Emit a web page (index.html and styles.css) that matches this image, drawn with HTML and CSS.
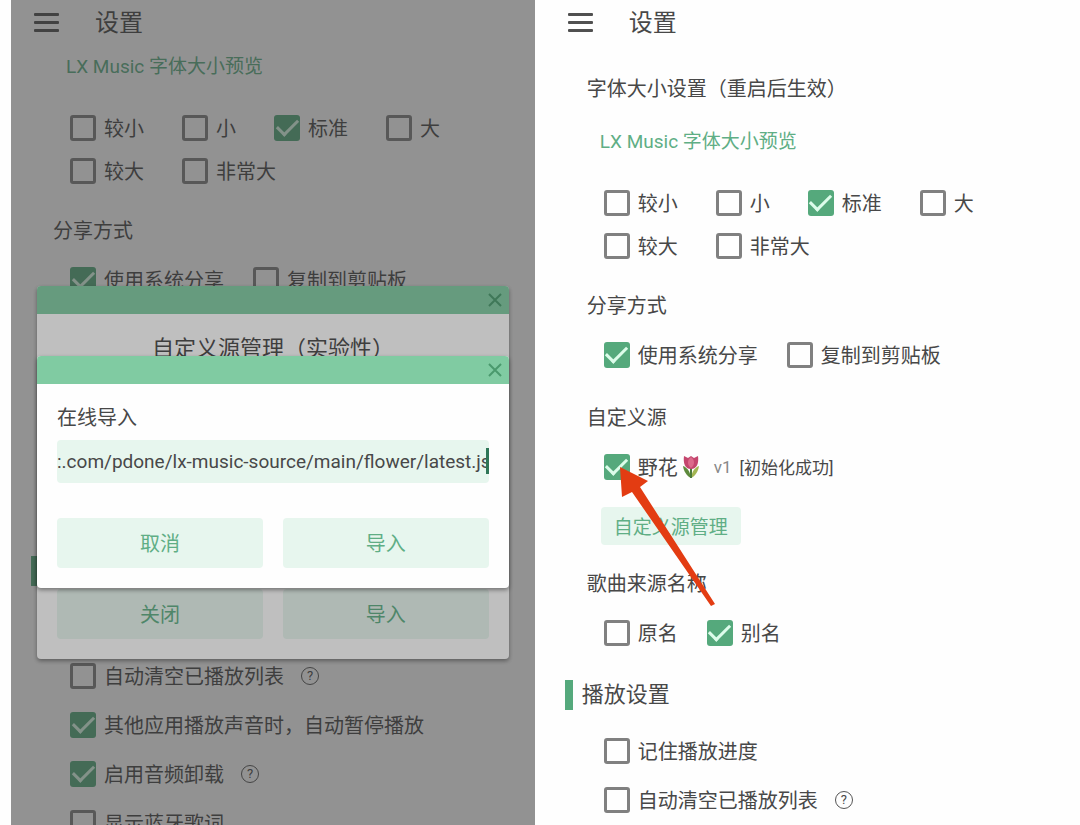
FILE: index.html
```html
<!DOCTYPE html>
<html lang="zh-CN">
<head>
  <meta charset="UTF-8" />
  <title>设置</title>
  <meta name="viewport" content="width=device-width, initial-scale=1.0" />
  <link rel="stylesheet" href="styles.css">
</head>
<body>

  <div class="phone phone-left">
    <header class="topbar">
      <button class="menu" aria-label="菜单"><span></span><span></span><span></span></button>
      <h1>设置</h1>
    </header>

    <main class="settings">
      <p class="preview">LX Music 字体大小预览</p>
      <div class="sizes">
        <label class="option"><input type="checkbox">较小</label>
        <label class="option"><input type="checkbox">小</label>
        <label class="option"><input type="checkbox" checked>标准</label>
        <label class="option"><input type="checkbox">大</label>
        <label class="option"><input type="checkbox">较大</label>
        <label class="option"><input type="checkbox">非常大</label>
      </div>

      <h3>分享方式</h3>
      <div class="row">
        <label class="option"><input type="checkbox" checked>使用系统分享</label>
        <label class="option"><input type="checkbox">复制到剪贴板</label>
      </div>

      <!-- hidden behind the dialogs, only the section bar sticks out -->
      <div class="covered"></div>

      <h2>播放设置</h2>
      <div class="row">
        <label class="option"><input type="checkbox" aria-label="记住播放进度"></label>
      </div>
      <div class="row">
        <label class="option"><input type="checkbox">自动清空已播放列表</label>
        <button class="help" aria-label="帮助">?</button>
      </div>
      <div class="row">
        <label class="option"><input type="checkbox" checked>其他应用播放声音时，自动暂停播放</label>
      </div>
      <div class="row">
        <label class="option"><input type="checkbox" checked>启用音频卸载</label>
        <button class="help" aria-label="帮助">?</button>
      </div>
      <div class="row">
        <label class="option"><input type="checkbox">显示蓝牙歌词</label>
      </div>
    </main>

    <!-- source manager -->
    <div class="overlay overlay-manager">
      <div class="modal modal-manager">
        <div class="modal-head">
          <button class="close" aria-label="关闭">
            <svg viewBox="0 0 14 14"><path d="M1 1L13 13M13 1L1 13"/></svg>
          </button>
        </div>
        <div class="modal-body">
          <h4 class="modal-title">自定义源管理（实验性）</h4>
          <div class="actions">
            <button>关闭</button>
            <button>导入</button>
          </div>
        </div>
      </div>
    </div>

    <!-- online import -->
    <div class="overlay overlay-import">
      <div class="modal">
        <div class="modal-head">
          <button class="close" aria-label="关闭">
            <svg viewBox="0 0 14 14"><path d="M1 1L13 13M13 1L1 13"/></svg>
          </button>
        </div>
        <div class="modal-body">
          <label class="field-label" for="url">在线导入</label>
          <div class="field">
            <input type="text" id="url" value=":.com/pdone/lx-music-source/main/flower/latest.js">
            <span class="caret"></span>
          </div>
          <div class="actions">
            <button>取消</button>
            <button>导入</button>
          </div>
        </div>
      </div>
    </div>
  </div>

  <div class="phone phone-right">
    <header class="topbar">
      <button class="menu" aria-label="菜单"><span></span><span></span><span></span></button>
      <h1>设置</h1>
    </header>

    <main class="settings">
      <h3>字体大小设置（重启后生效）</h3>
      <p class="preview">LX Music 字体大小预览</p>
      <div class="sizes">
        <label class="option"><input type="checkbox">较小</label>
        <label class="option"><input type="checkbox">小</label>
        <label class="option"><input type="checkbox" checked>标准</label>
        <label class="option"><input type="checkbox">大</label>
        <label class="option"><input type="checkbox">较大</label>
        <label class="option"><input type="checkbox">非常大</label>
      </div>

      <h3>分享方式</h3>
      <div class="row">
        <label class="option"><input type="checkbox" checked>使用系统分享</label>
        <label class="option"><input type="checkbox">复制到剪贴板</label>
      </div>

      <h3>自定义源</h3>
      <div class="row source">
        <label class="option">
          <input type="checkbox" checked>
          <span class="source-name">野花<svg class="tulip" viewBox="0 0 20 24">
            <path d="M10 23C6 21 3 17 2 11C7 13 9 17 10 23Z" fill="#5d8a3c"/>
            <path d="M10 23C14 21 17 17 18 11C13 13 11 17 10 23Z" fill="#a3b552"/>
            <path d="M9 13H11V23H9Z" fill="#4d7a3a"/>
            <path d="M3 1L7 3L10 1L13 3L17 1C18 8 16 14 10 14C4 14 2 8 3 1Z" fill="#c4466e"/>
            <path d="M10 2C14 5 14 10 10 13C6 10 6 5 10 2Z" fill="#dc6a8b"/>
          </svg></span>
          <span class="version">v1</span>
          <span class="status">[初始化成功]</span>
        </label>
        <svg class="arrow" viewBox="0 0 96 140">
          <path d="M0 0L28 14L20 20L95 137L91 139L12 25L2 30Z"/>
        </svg>
      </div>
      <button class="manage">自定义源管理</button>

      <h3>歌曲来源名称</h3>
      <div class="row">
        <label class="option"><input type="checkbox">原名</label>
        <label class="option"><input type="checkbox" checked>别名</label>
      </div>

      <h2>播放设置</h2>
      <div class="row">
        <label class="option"><input type="checkbox">记住播放进度</label>
      </div>
      <div class="row">
        <label class="option"><input type="checkbox">自动清空已播放列表</label>
        <button class="help" aria-label="帮助">?</button>
      </div>
    </main>
  </div>

</body>
</html>
```

FILE: styles.css
```css
* {
  box-sizing: border-box;
}

body {
  margin: 0;
  padding-left: 11px;
  background-color: #fefefe;
  color: #484848;
  display: grid;
  grid-template-columns: 49fr 51fr;
  height: 100vh;
  overflow: hidden;
  font-family: Roboto, "Noto Sans CJK SC", sans-serif;
  font-size: 20px;
  font-weight: 400;
}

h1, h2, h3, h4, p {
  margin: 0;
  font-weight: inherit;
}

button, input {
  font: inherit;
  color: inherit;
}

button {
  border: none;
  padding: 0;
  background: none;
  cursor: pointer;
}

.phone {
  position: relative;
  height: 100vh;
  overflow: hidden;
  padding: 0 20px;
  background-color: #fefefe;
}

.phone-right {
  padding-left: 30px;
}

.topbar {
  display: flex;
  align-items: center;
  gap: 36px;
  height: 44px;
  padding-left: 3px;
}

.topbar h1 {
  padding-bottom: 4px;
  font-size: 24px;
}

.menu {
  display: flex;
  flex-direction: column;
  gap: 5px;
  width: 25px;
}

.menu span {
  height: 3px;
  border-radius: 1px;
  background-color: #505050;
}

.phone-right .settings {
  padding-top: 6px;
}

h2 {
  display: flex;
  align-items: center;
  gap: 9px;
  height: 30px;
  margin: 23px 0 16px;
  font-size: 22px;
  line-height: 28px;
}

h2::before {
  content: "";
  width: 8px;
  height: 30px;
  background-color: #55a97c;
}

h3 {
  margin: 17px 0 2px 22px;
  font-size: 20px;
  line-height: 44px;
}

.preview {
  margin: 0 0 16px 35px;
  font-size: 19px;
  line-height: 46px;
  color: #5fae85;
}

h3 + .preview {
  margin-top: 8px;
}

.sizes {
  display: flex;
  flex-wrap: wrap;
  column-gap: 38px;
  margin-left: 39px;
}

.sizes .option {
  height: 43px;
}

.row {
  display: flex;
  align-items: center;
  gap: 29px;
  height: 49px;
  margin-left: 39px;
}

.option {
  display: flex;
  align-items: center;
  gap: 8px;
  white-space: nowrap;
}

.option input {
  appearance: none;
  flex: none;
  width: 26px;
  height: 26px;
  margin: 0;
  border: 3px solid #808080;
  border-radius: 3px;
}

.option input:checked {
  display: grid;
  place-items: center;
  border: none;
  background-color: #55a97c;
}

.option input:checked::before {
  content: "";
  width: 18px;
  height: 9px;
  border: solid #dcfcea;
  border-width: 0 0 3px 3px;
  transform: translateY(-3px) rotate(-45deg);
}

.covered {
  height: 229px;
}

.help {
  width: 18px;
  height: 18px;
  margin-left: -12px;
  border: 1px solid #555;
  border-radius: 50%;
  font-size: 13px;
  line-height: 16px;
}

.manage {
  height: 38px;
  margin: 16px 0 0 36px;
  padding: 0 13px 2px;
  border-radius: 4px;
  background-color: #e7f6ee;
  color: #5fae85;
  font-size: 19px;
}

.source {
  position: relative;
}

.source-name {
  display: flex;
  align-items: center;
}

.tulip {
  width: 22px;
  height: 24px;
  margin-left: 2px;
}

.version {
  margin-left: 4px;
  font-size: 17px;
  color: #888;
}

.status {
  font-size: 17px;
}

.arrow {
  position: absolute;
  top: 25px;
  left: 16px;
  width: 96px;
  height: 140px;
  fill: #e33c12;
}

.overlay {
  position: absolute;
  inset: 0;
  padding: 0 26px;
}

.overlay-manager {
  padding-top: 286px;
  background-color: rgba(74, 74, 74, 0.35);
}

.overlay-import {
  padding-top: 356px;
  background-color: rgba(37, 37, 37, 0.29);
}

.modal {
  display: flex;
  flex-direction: column;
  overflow: hidden;
  border-radius: 4px;
  background-color: #fefefe;
  box-shadow: 0 2px 4px rgba(0, 0, 0, 0.4);
}

.modal-manager {
  height: 373px;
}

.modal-head {
  display: flex;
  justify-content: flex-end;
  align-items: center;
  height: 28px;
  padding-right: 7px;
  background-color: #80cba2;
}

.close {
  display: flex;
}

.close svg {
  width: 14px;
  height: 14px;
  fill: none;
  stroke: #4a9a6d;
  stroke-width: 2;
}

.modal-body {
  flex: 1;
  display: flex;
  flex-direction: column;
  padding: 12px 20px 20px;
}

.modal-title {
  font-size: 22px;
  line-height: 46px;
  text-align: center;
}

.field-label {
  line-height: 44px;
}

.field {
  position: relative;
  margin-bottom: 35px;
}

.field input {
  display: block;
  width: 100%;
  height: 43px;
  padding: 0;
  border: none;
  border-radius: 4px;
  background-color: #e7f6ee;
  font-size: 19px;
  text-align: right;
}

.caret {
  position: absolute;
  top: 8px;
  right: 0;
  width: 3px;
  height: 26px;
  background-color: #2f7657;
}

.actions {
  display: grid;
  grid-template-columns: 1fr 1fr;
  gap: 20px;
  margin-top: auto;
}

.actions button {
  height: 50px;
  padding-bottom: 1px;
  border-radius: 4px;
  background-color: #e7f6ee;
  color: #5fae85;
}
```
